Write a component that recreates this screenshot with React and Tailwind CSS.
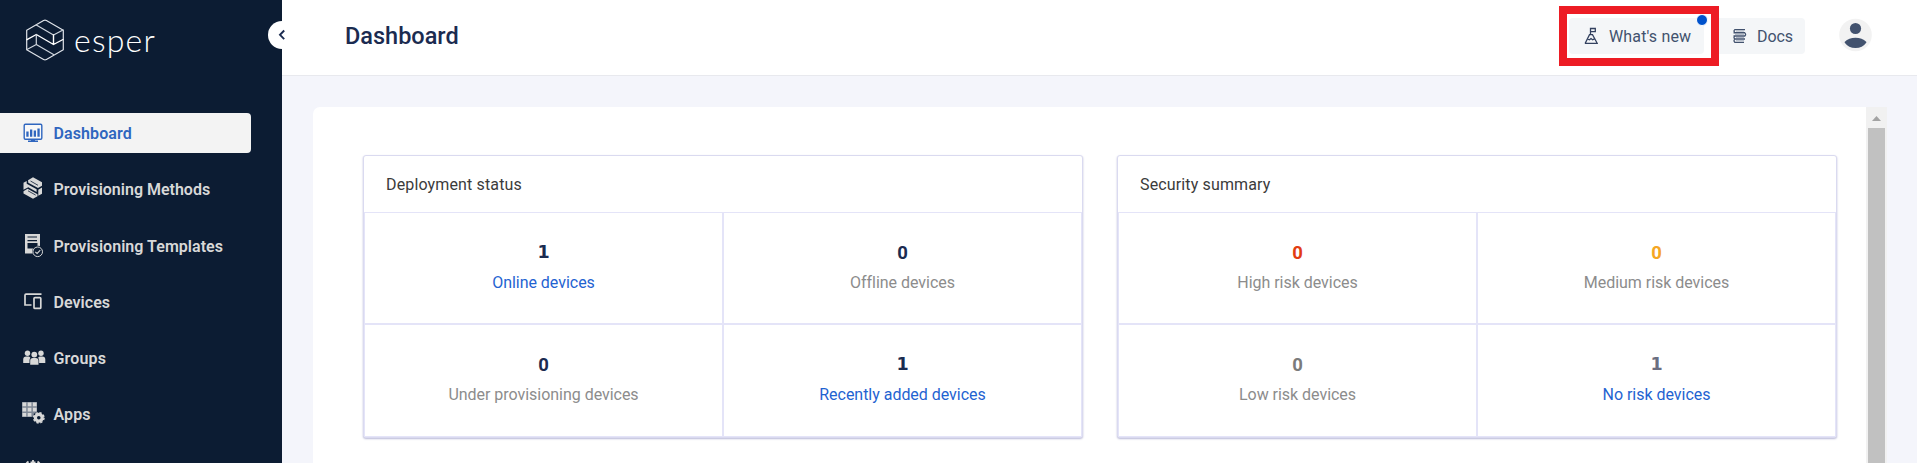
import React from "react";

function Logo() {
  return (
    <svg width="38" height="42" viewBox="0 0 38 42" fill="none" stroke="#fff" strokeWidth="1.2" strokeLinejoin="round" strokeLinecap="round">
      <path d="M.7 11.3 17.6 1.5Q19 .7 20.4 1.5L37.3 11.3V30.7L20.4 40.4Q19 41.2 17.6 40.4L.7 30.7Z" stroke="#dfe3e9" />
      <path d="M10.3 6 27.5 16 37 11" stroke="#cfd5dd" />
      <path d="M27.5 16V25.5L37 20.5M27.5 25.5 10.3 15.5 1 20.7" strokeWidth="1.4" />
      <path d="M10.3 15.5V25.5L1 30.5M10.3 25.5 27.5 35.5" stroke="#cfd5dd" />
    </svg>
  );
}

function DashboardIcon() {
  return (
    <svg width="24" height="24" viewBox="0 0 24 24" fill="#2f66bf">
      <rect x="2.200" y="3.200" width="17.600" height="15" rx="1.2" fill="#f8f8f8" stroke="#2f66bf" strokeWidth="1.4" />
      <path d="M4.300 10.500h2.300v5.200H4.300zM8 8.500h2.300v7.200H8zM11.700 9.500H14v6.200h-2.300zM15.400 7.500h2.300v8.200h-2.300zM9 18.500h4v1.500H9zM6 19.600h10v1.500H6z" />
    </svg>
  );
}

function MethodsIcon() {
  return (
    <svg width="24" height="24" viewBox="0 0 24 24" fill="#d8d8d8">
      <path d="M6 4.200 11 1.300 20 6.200V9.800L16 12.100 6.300 6.800ZM1.500 6.800 4.700 5V7.700L14.600 13.200V16L6.300 11.300 1.500 13.700ZM20 11.500V17.800L16.300 19.700V13.700ZM1.500 15.200 5.600 12.800 15.500 18.200V20.200L11 22.700 1.500 17.600Z" />
      <path d="m8.500 5 7.500 4.300M6 14.800l7.700 4.300" stroke="#0c1c33" strokeWidth=".8" />
    </svg>
  );
}

function TemplatesIcon() {
  return (
    <svg width="24" height="24" viewBox="0 0 24 24" fill="none">
      <path d="M3 0h15v12a6 6 0 0 0-7.500 7.500H3Z" fill="#d8d8d8" />
      <path d="M5.500 3h9.500M5.500 6.600h9.500" stroke="#0c1c33" strokeWidth="1.100" />
      <path d="M5.500 9h10v3.500q-3 .5-4 2h-6Z" fill="#0c1c33" />
      <circle cx="15.700" cy="17.800" r="4.800" fill="#0c1c33" stroke="#d8d8d8" strokeWidth="1" />
      <path d="m13.300 17.800 1.800 1.700 3.200-3.300" stroke="#d8d8d8" strokeWidth="1.100" />
    </svg>
  );
}

function DevicesIcon() {
  return (
    <svg width="24" height="24" viewBox="0 0 24 24" fill="none" stroke="#d8d8d8" strokeWidth="1.700">
      <path d="M19.500 4.200H4a1 1 0 0 0-1 1V15h6.500" />
      <rect x="12" y="7.600" width="6.800" height="10.800" rx="1" />
    </svg>
  );
}

function GroupsIcon() {
  return (
    <svg width="24" height="24" viewBox="0 0 24 24" fill="#d8d8d8">
      <circle cx="5.500" cy="7.200" r="2.700" />
      <circle cx="19" cy="7.200" r="2.700" />
      <circle cx="12.300" cy="8.600" r="2.900" />
      <path d="M1.200 17v-3.500a3 3 0 0 1 3-3h2.600q1 .3 1.600 1.200Q7.500 13 7.500 14.200V17ZM23.300 17v-3.500a3 3 0 0 0-3-3h-2.600q-1 .3-1.600 1.200 1 1.300 1 2.500V17ZM8.200 18.800v-4a2.700 2.700 0 0 1 2.700-2.700h2.900a2.700 2.700 0 0 1 2.700 2.700v4Z" />
    </svg>
  );
}

function AppsIcon() {
  return (
    <svg width="24" height="24" viewBox="0 0 24 24" fill="#d8d8d8">
      <path d="M0 0h15v11l-4 4H0Z" fill="#7f8896" />
      <path d="M.5.500h3.700v3.700H.500zM5.700.500h3.700v3.700H5.700zM10.900.500h3.700v3.700h-3.700zM.500 5.700h3.700v3.700H.500zM5.700 5.700h3.700v3.700H5.700zM10.900 5.700h3.700v3.700h-3.700zM.500 10.900h3.700v3.700H.500zM5.700 10.900h3.700v3.700H5.700z" />
      <circle cx="16.800" cy="15.800" r="6.200" fill="#0c1c33" />
      <circle cx="16.800" cy="15.800" r="3.400" fill="none" stroke="#d8d8d8" strokeWidth="3.200" />
      <circle cx="16.800" cy="15.800" r="5.200" fill="none" stroke="#d8d8d8" strokeWidth="1.500" strokeDasharray="2.300 1.784" />
    </svg>
  );
}

function MoreIcon() {
  return (
    <svg width="24" height="24" viewBox="0 0 24 24" fill="none" stroke="#d8d8d8" strokeWidth="1.800">
      <path d="M5.500 1.500A9 9 0 0 0 5.500 16M14.500 1.500a9 9 0 0 1 0 14.500M7.500 2.500h5M10 0v9" />
    </svg>
  );
}

const items = [
  { label: "Dashboard", Icon: DashboardIcon, active: true, tracking: "tracking-[0.1px]", iconBox: "" },
  { label: "Provisioning Methods", Icon: MethodsIcon, tracking: "tracking-normal", iconBox: "-mt-0.5" },
  { label: "Provisioning Templates", Icon: TemplatesIcon, tracking: "tracking-[0.04px]", iconBox: "" },
  { label: "Devices", Icon: DevicesIcon, tracking: "tracking-[0.05px]", iconBox: "" },
  { label: "Groups", Icon: GroupsIcon, tracking: "tracking-[0.15px]", iconBox: "" },
  { label: "Apps", Icon: AppsIcon, tracking: "tracking-[0.1px]", iconBox: "" },
];

function Sidebar() {
  return (
    <aside className="h-[463px] w-[282px] shrink-0 overflow-hidden bg-[#0c1c33]">
      <div className="flex h-[113px] items-start gap-[10px] pl-[26px] pt-[19px]">
        <Logo />
        <span className="font-[Lato] text-[32px] font-light leading-[42px] tracking-[1.2px] text-white">esper</span>
      </div>
      <nav className="flex flex-col gap-[16.3px]">
        {items.map(({ label, Icon, active, tracking, iconBox }) => (
          <div
            key={label}
            className={`flex h-10 w-[251px] shrink-0 items-center gap-[7.5px] rounded-r pl-[22px] ${active ? "bg-[#f3f3f3] text-[#2f66bf]" : "text-[#d8d8d8]"}`}
          >
            <span className={`block h-6 w-6 shrink-0 ${iconBox}`}><Icon /></span>
            <span className={`whitespace-nowrap pt-0.5 text-base font-semibold ${tracking}`}>{label}</span>
          </div>
        ))}
        <div className="pl-[23px] pt-[9px]"><MoreIcon /></div>
      </nav>
    </aside>
  );
}

function FlagIcon() {
  return (
    <svg width="14" height="18" viewBox="0 0 14 18" fill="none" stroke="#33415f" strokeWidth="1.300">
      <path d="M6.500 8V1.500h4.800V4.700H6.500M.8 16.300h12.400L8.500 7.700h-3L1.200 16.300M3.500 11.800l2 1 1.500-1.300 1.600 1.300 1.900-1" />
    </svg>
  );
}

function BooksIcon() {
  return (
    <svg width="15" height="16" viewBox="0 0 15 16" fill="none" stroke="#42526e" strokeWidth="1.300">
      <path d="M13 1.600H2.800q-1.600 1.500 0 3H13M1.500 4.900h11.300q1.600 1.500 0 3.100H1.500M13 8H2.800q-1.600 1.500 0 3H13M12 11.100H2.800q-1.600 1.700 0 3.200H12" />
      <path d="M4 3.100h8M3 6.400h9M4 9.500h8M4 12.700h8" stroke="#9aa5b6" strokeWidth=".8" />
    </svg>
  );
}

function Header() {
  return (
    <header className="flex h-[76px] items-start justify-between border-b border-[#e8e9ee] bg-white">
      <h1 className="mt-[18px] pl-[63px] text-[23.5px] font-medium leading-[36px] text-[#1b2b50]">Dashboard</h1>
      <div className="mr-[45px] flex">
        <div className="relative z-10 mt-[6px] flex h-[60px] w-[160px] border-8 border-[#ed1c24] bg-white pl-[2px] pt-1">
          <button className="flex h-9 w-[135px] items-center rounded bg-[#f4f6f8] pl-[15px] text-base text-[#42526e]">
            <FlagIcon />
            <span className="ml-[11px] whitespace-nowrap pt-0.5 tracking-[0.15px]">What's new</span>
          </button>
          <span className="absolute left-[129px] top-0 h-3 w-3 rounded-full border border-white bg-[#0052cc]" />
        </div>
        <button className="mt-[18px] flex h-9 w-[86px] items-center rounded-r bg-[#f4f6f8] pl-[13px] text-base text-[#42526e]">
          <BooksIcon />
          <span className="ml-[10px] pt-0.5 tracking-[-0.1px]">Docs</span>
        </button>
        <svg className="ml-[34px] mt-[18px]" width="33" height="34" viewBox="0 0 33 34" fill="#42526e">
          <circle cx="16.500" cy="17" r="16.300" fill="#f2f2f2" />
          <circle cx="16.500" cy="10.500" r="5.600" />
          <path d="M5.800 23.800q4-4 10.700-4t10.700 4q.3.500 0 1-3.700 5.300-10.700 5.300T5.800 24.800q-.3-.5 0-1Z" />
        </svg>
      </div>
    </header>
  );
}

const panels = [
  {
    title: "Deployment status",
    cells: [
      { value: "1", label: "Online devices", color: "text-[#1b2b50]", link: true },
      { value: "0", label: "Offline devices", color: "text-[#1b2b50]" },
      { value: "0", label: "Under provisioning devices", color: "text-[#1b2b50]" },
      { value: "1", label: "Recently added devices", color: "text-[#1b2b50]", link: true },
    ],
  },
  {
    title: "Security summary",
    cells: [
      { value: "0", label: "High risk devices", color: "text-[#e23c12]" },
      { value: "0", label: "Medium risk devices", color: "text-[#f5a623]" },
      { value: "0", label: "Low risk devices", color: "text-[#7b7b7b]" },
      { value: "1", label: "No risk devices", color: "text-[#6b6e80]", link: true },
    ],
  },
];

function Panel({ title, cells }) {
  return (
    <section className="h-[283px] w-[720px] shrink-0 rounded-[3px] border border-[#dadaf0] bg-white shadow-[0_1px_2px_#b9b9d8]">
      <h2 className="h-14 pl-[22px] text-base leading-[58px] tracking-[0.14px] text-[#3b3b3b]">{title}</h2>
      <div className="grid h-[225px] grid-cols-2 grid-rows-[112px_113px]">
        {cells.map((c) => (
          <div key={c.label} className="flex flex-col items-center border border-[#e4e4f8] pt-[27px]">
            <span className={`leading-6 font-bold ${c.value === "1" ? "font-['DejaVu_Sans'] text-[17.5px]" : "pt-px text-[18.5px]"} h-6 ${c.color}`}>{c.value}</span>
            <span className={`mt-[7px] text-base leading-6 tracking-[-0.03px] ${c.link ? "text-[#1f63d1]" : "text-[#8c8c8c]"}`}>{c.label}</span>
          </div>
        ))}
      </div>
    </section>
  );
}

export default function App() {
  return (
    <div className="relative flex h-[463px] w-[1917px] overflow-hidden bg-[#f4f5fb] font-[Roboto,sans-serif]">
      <Sidebar />
      <div className="flex min-w-0 flex-1 flex-col">
        <Header />
        <main className="ml-[31px] mt-[31px] flex h-[356px] w-[1574px] overflow-hidden rounded-tl-[7px] bg-white">
          <div className="flex flex-1 gap-[34px] pl-[50px] pt-12">
            {panels.map((p) => <Panel key={p.title} {...p} />)}
          </div>
          <div className="flex w-[21px] shrink-0 flex-col items-center bg-[#f1f1f1]">
            <svg className="h-[21px] shrink-0" width="9" height="21" viewBox="0 0 9 21"><path d="M0 14 4.500 9 9 14Z" fill="#a3a3a3" /></svg>
            <div className="w-[17px] flex-1 bg-[#c1c1c1]" />
          </div>
        </main>
      </div>
      <span className="absolute left-[268px] top-[21px] flex h-7 w-7 items-center justify-center rounded-full bg-white">
        <svg width="8" height="12" viewBox="0 0 8 12" fill="none" stroke="#1b2b50" strokeWidth="1.900"><path d="M6.200 1.500 2 5.800l4.200 4.300" /></svg>
      </span>
    </div>
  );
}
